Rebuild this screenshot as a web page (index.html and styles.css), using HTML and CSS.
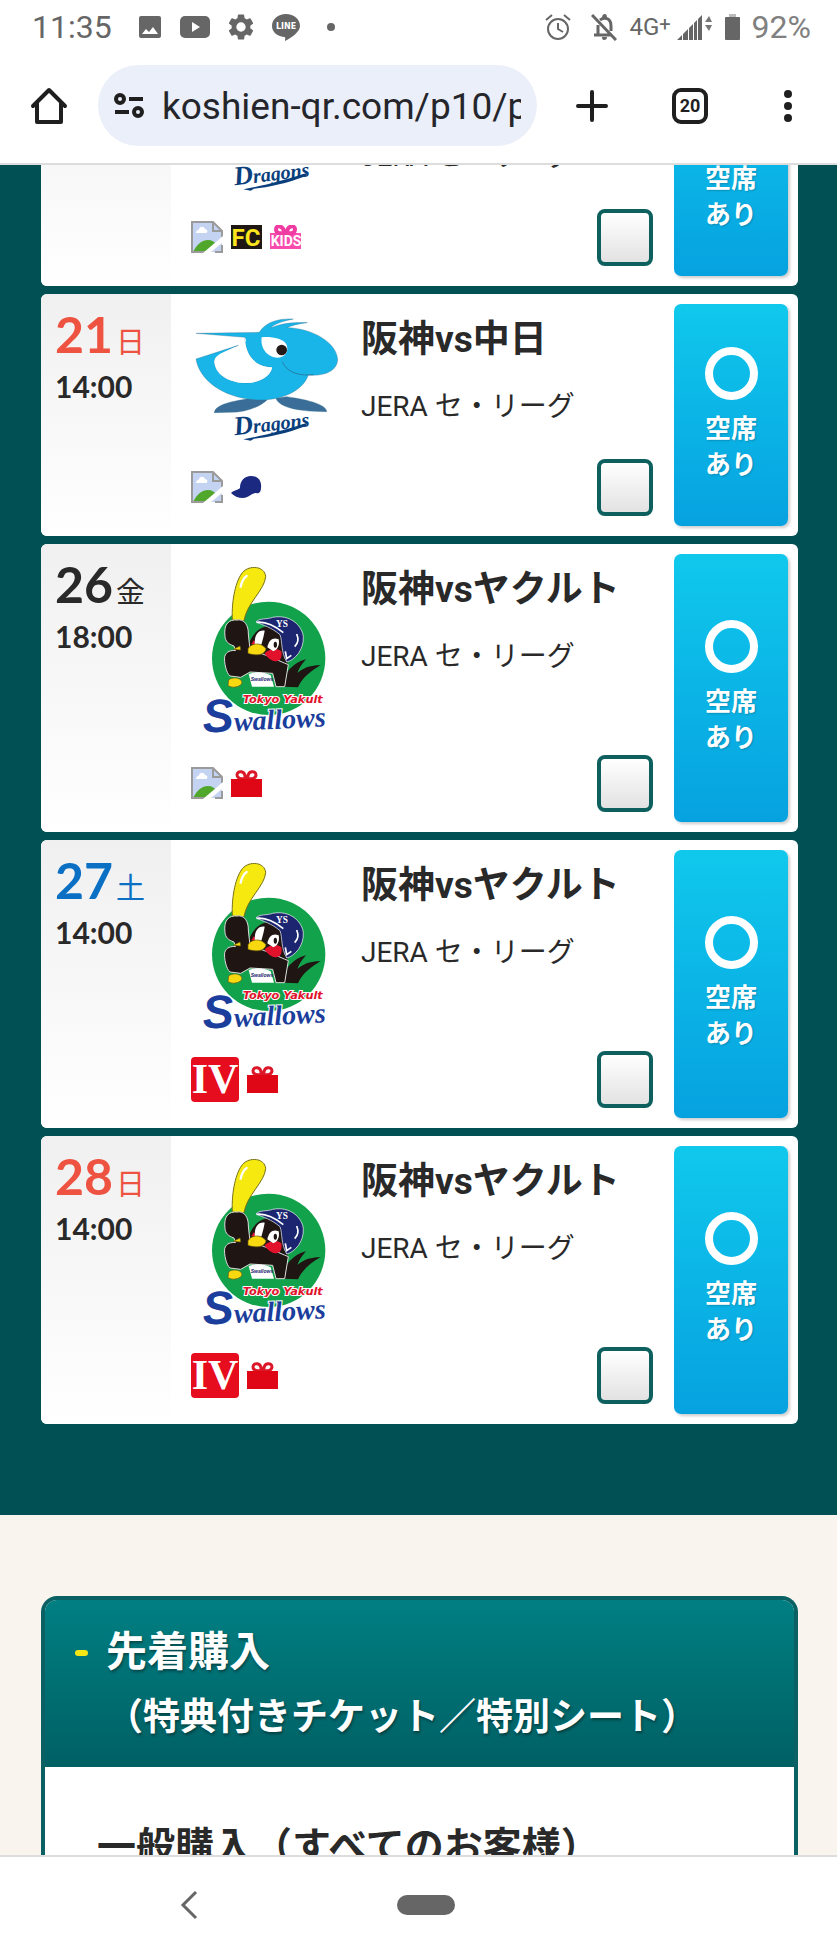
FILE: index.html
```html
<!DOCTYPE html>
<html lang="ja">
<head>
    <meta charset="UTF-8">
    <meta name="viewport" content="width=device-width, initial-scale=1.0">
    <title>甲子園 チケット購入</title>
    <link rel="stylesheet" href="styles.css">
</head>
<body>
    <!-- logos and icons used more than once -->
    <svg class="defs" aria-hidden="true">
        <symbol id="dragons" viewBox="483 462 450 387">
            <g stroke="#2a6484" stroke-width="1">
                <path fill="#3a6e99" d="M553 758C555 735 600 725 650 717L712 719C690 742 640 758 600 757ZM738 715C745 738 790 755 890 755C890 735 840 720 770 710Z"/>
                <path fill="#19b5e9" d="M498 520L688 517C708 482 755 475 790 477C765 482 735 490 722 504C760 487 800 487 832 488C800 492 784 497 772 503C850 505 922 550 923 600C920 635 880 649 835 645C820 690 760 720 690 720C580 717 508 660 498 597L625 556C600 570 556 585 553 605C556 650 610 670 650 669C700 667 725 642 726 622C670 620 645 580 645 532L560 525Z"/>
                <path fill="none" stroke-width="2" d="M757 605C772 640 810 648 850 644"/>
            </g>
            <path fill="#fff" d="M645 532C660 560 618 556 600 568C570 580 553 590 553 605C556 650 610 670 650 669C700 667 725 642 726 622C670 620 645 580 645 532Z"/>
            <path fill="#fff" d="M695 532C690 568 715 593 742 593C765 593 777 575 770 555C762 535 720 529 695 532Z"/>
            <circle cx="755" cy="570" r="16" fill="#241a18"/>
            <text x="614" y="826" transform="rotate(-7 614 826)" class="dragons-text"><tspan class="dragons-d">D</tspan>ragons</text>
            <path fill="#0a3f7c" d="M640 838C700 826 760 812 832 788L828 798C770 820 715 832 672 836L662 842Z"/>
        </symbol>
        <symbol id="swallows" viewBox="483 72 450 525">
            <circle cx="716" cy="355" r="170" fill="#12a24c"/>
            <path fill="#1f1613" d="M762 440L772 396C790 372 815 360 828 358C812 376 806 388 803 398C825 380 850 375 872 376C845 390 815 415 804 442Z"/>
            <path fill="#f6e90f" stroke="#77701c" stroke-width="3" d="M607 240C604 180 618 120 638 97C658 74 705 78 707 110C704 150 650 190 642 242Z"/>
            <path fill="none" stroke="#fff" stroke-width="7" stroke-linecap="round" d="M632 140C636 122 644 112 650 108"/>
            <path fill="#1f1613" d="M655 340C650 300 680 256 730 256L776 280L772 380Z"/>
            <path fill="#1f1613" stroke="#ddd" stroke-width="3" d="M585 290C580 250 598 238 622 240C642 236 656 256 655 282L660 330C700 340 745 362 775 374L764 440L738 440L728 400L660 396L632 412L600 408C588 398 582 366 584 350C588 334 604 330 616 332L612 318C594 312 587 304 585 290Z"/>
            <path fill="#1c2570" stroke="#fff" stroke-width="2" d="M678 246C686 234 714 238 728 232C780 222 816 256 820 290C822 330 794 360 770 366C752 334 758 306 750 284C724 262 700 256 678 246Z"/>
            <path fill="none" stroke="#fff" stroke-width="5" d="M680 247C706 244 735 258 760 278M800 282C808 300 802 312 794 320M766 334L770 356L784 346"/>
            <text x="738" y="262" class="cap-text">YS</text>
            <path fill="#e2122c" d="M704 340C716 326 742 322 754 334C758 352 750 364 736 364C722 362 710 352 704 340ZM664 312L672 300L678 314Z"/>
            <path fill="#fff" d="M674 312C674 284 684 270 704 272C702 286 698 300 694 314ZM712 322C716 300 730 290 746 298C750 316 742 330 730 334Z"/>
            <ellipse cx="736" cy="314" rx="5" ry="9" fill="#1f1613"/>
            <path fill="#f8d90f" stroke="#6b5a10" stroke-width="2" d="M654 326C664 308 694 306 708 326C706 342 684 350 654 340Z"/>
            <path fill="#f8d90f" stroke="#6b5a10" stroke-width="2" d="M596 420C606 410 632 412 636 426C636 442 602 446 594 436ZM610 328L630 318L632 330Z"/>
            <path fill="#fff" d="M656 402C680 394 708 398 722 406L732 440L666 440Z"/>
            <text x="662" y="424" class="jersey-text">Swallows</text>
            <text x="520" y="578" transform="rotate(-3 520 578)" class="swallows-text"><tspan class="swallows-s">S</tspan>wallows</text>
            <text x="638" y="488" class="yakult-text">Tokyo Yakult</text>
        </symbol>
        <symbol id="broken" viewBox="0 0 32 32">
            <path fill="#c5d3f3" d="M1 1H22L31 10V31H1Z"/>
            <path fill="#fff" d="M5 12C5 9 8 9 8 8C9 5 13 5 14 8C17 8 17 12 15 12Z"/>
            <path fill="#50a72c" d="M2 31C6 23 11 19 17 19C21 19 24 21 26 24L20 31Z"/>
            <path fill="none" stroke="#9b9b9b" stroke-width="2" d="M14 31H1V1H22L31 10V16M22 1V10H31M31 24V31H24"/>
            <path fill="#fff" d="M12 32L32 15V21L19 32Z"/>
        </symbol>
        <symbol id="gift" viewBox="0 0 31 27">
            <path fill="none" stroke="#dc1728" stroke-width="3" d="M14 9C15 0 6 0 6 5C6 8 9 9 14 9ZM17 9C16 0 25 0 25 5C25 8 22 9 17 9Z"/>
            <path fill="#df0716" d="M0 9H31V27H0Z"/>
        </symbol>
        <symbol id="cap" viewBox="0 0 31 24">
            <path fill="#1c2980" d="M0 18C3 15 7 15 9 13C9 6 13 1 20 1C27 1 31 6 30 13C30 17 28 19 25 18C21 18 17 23 12 23C7 23 3 21 0 18Z"/>
        </symbol>
    </svg>

    <header class="browser">
        <div class="status">
            <span class="clock">11:35</span>
            <div class="notices">
                <svg width="24" height="24" viewBox="0 0 24 24"><path fill="#666" fill-rule="evenodd" d="M3 1H21Q23 1 23 3V21Q23 23 21 23H3Q1 23 1 21V3Q1 1 3 1ZM4 19H20L15 12L11 17L8 14Z"/></svg>
                <svg width="30" height="22" viewBox="0 0 30 22"><rect width="30" height="22" rx="5" fill="#666"/><path fill="#fff" d="M12 6L20 11L12 16Z"/></svg>
                <svg width="26" height="26" viewBox="2 2 20 20"><path fill="#666" d="M19.14 12.94c.04-.3.06-.61.06-.94s-.02-.64-.07-.94l2.03-1.58a.49.49 0 0 0 .12-.61l-1.92-3.32a.49.49 0 0 0-.59-.22l-2.39.96a7 7 0 0 0-1.62-.94l-.36-2.54a.48.48 0 0 0-.48-.41h-3.84a.47.47 0 0 0-.47.41l-.36 2.54c-.59.24-1.13.57-1.62.94l-2.39-.96a.48.48 0 0 0-.59.22L2.74 8.87a.48.48 0 0 0 .12.61l2.03 1.58c-.05.3-.09.63-.09.94s.02.64.07.94l-2.03 1.58a.49.49 0 0 0-.12.61l1.92 3.32c.12.22.37.29.59.22l2.39-.96c.5.38 1.03.7 1.62.94l.36 2.54c.05.24.24.41.48.41h3.84c.24 0 .44-.17.47-.41l.36-2.54a7 7 0 0 0 1.62-.94l2.39.96c.22.08.47 0 .59-.22l1.92-3.32a.48.48 0 0 0-.12-.61zM12 15.6a3.6 3.6 0 1 1 0-7.2 3.6 3.6 0 0 1 0 7.2z"/></svg>
                <svg width="28" height="27" viewBox="0 0 28 27"><path fill="#666" d="M14 0C6 0 0 5 0 12C0 18 5 22 12 23C14 23 13 25 13 27C19 24 28 18 28 12C28 5 22 0 14 0Z"/><text x="14" y="15" class="line-text">LINE</text></svg>
                <span class="dot"></span>
            </div>
            <div class="signals">
                <svg width="26" height="26" viewBox="0 0 26 26" fill="none" stroke="#666" stroke-width="2"><circle cx="13" cy="15" r="10"/><path d="M13 9V15L18 18M1 6L7 1M25 6L19 1"/></svg>
                <svg width="26" height="27" viewBox="0 0 26 27" fill="none" stroke="#666" stroke-width="2"><path stroke-width="3" d="M3 21H21M7 21V11M9 6Q13 3 17 5Q20 7 20 12V17M1 1L25 26"/><path fill="#666" stroke="none" d="M11 4Q11 0 14 0Q16 0 16 4ZM11 23H16Q16 26 13 26Q11 26 11 23Z"/></svg>
                <span class="network">4G<sup>+</sup></span>
                <svg width="36" height="25" viewBox="0 0 36 25"><path fill="#666" d="M0 25L5 20V25ZM6 19L11 14V25H6ZM12 13L16 9V25H12ZM17 8L20 5V25H17ZM21 4L25 0V25H21Z"/><path fill="#777" d="M28 7L32 1L35 7ZM28 10H35L32 16Z"/></svg>
                <svg width="15" height="26" viewBox="0 0 15 26"><path fill="#bbb" d="M4 0H11V3H4Z"/><rect y="3" width="15" height="23" rx="1" fill="#666"/></svg>
                <span class="battery">92%</span>
            </div>
        </div>
        <div class="toolbar">
            <button class="tool" aria-label="ホーム">
                <svg width="38" height="38" viewBox="0 0 38 38" fill="none" stroke="#1f1f1f" stroke-width="4" stroke-linejoin="round" stroke-linecap="round"><path d="M3 19L19 3L35 19M7 16V35H31V16"/></svg>
            </button>
            <div class="address">
                <svg width="30" height="26" viewBox="0 0 30 26" fill="none" stroke="#1f1f1f" stroke-width="4"><circle cx="6" cy="6" r="4"/><path d="M15 6H29M1 19H15"/><circle cx="24" cy="19" r="4"/></svg>
                <input type="text" class="url" aria-label="アドレス" value="koshien-qr.com/p10/p10.html">
            </div>
            <button class="tool" aria-label="新しいタブ">
                <svg width="34" height="34" viewBox="0 0 34 34" stroke="#1f1f1f" stroke-width="4" stroke-linecap="round"><path d="M17 3V31M3 17H31"/></svg>
            </button>
            <button class="tool" aria-label="タブ一覧"><span class="tabs">20</span></button>
            <button class="tool" aria-label="メニュー">
                <svg width="10" height="34" viewBox="0 0 10 34" fill="#1f1f1f"><circle cx="5" cy="5" r="4"/><circle cx="5" cy="17" r="4"/><circle cx="5" cy="29" r="4"/></svg>
            </button>
        </div>
    </header>

    <main class="page">
        <ul class="games">
            <li class="game game-scrolled">
                <div class="date"><p class="day sat"><b>20</b>土</p><p class="time">14:00</p></div>
                <div class="team">
                    <svg class="logo dragons" role="img" aria-label="Dragons"><use href="#dragons"/></svg>
                    <div class="perks">
                        <svg width="32" height="32"><use href="#broken"/></svg>
                        <svg width="31" height="24" viewBox="0 0 31 24"><rect width="31" height="24" fill="#1f1714"/><text x="15" y="21" class="fc-text">FC</text></svg>
                        <svg width="31" height="24" viewBox="0 0 31 24"><path fill="#fa4cae" d="M0 8H31V24H0Z"/><path fill="none" stroke="#f03ba2" stroke-width="4" d="M14 8C14 0 6 0 6 4C6 8 9 9 14 8ZM17 8C17 0 25 0 25 4C25 8 22 9 17 8Z"/><text x="16" y="21" class="kids-text">KIDS</text></svg>
                    </div>
                </div>
                <div class="info">
                    <h2>阪神vs中日</h2>
                    <p>JERA セ・リーグ</p>
                    <input type="checkbox" aria-label="20日 阪神vs中日">
                </div>
                <a class="seats" href="#"><span class="ring"></span>空席<br>あり</a>
            </li>
            <li class="game">
                <div class="date"><p class="day sun"><b>21</b>日</p><p class="time">14:00</p></div>
                <div class="team">
                    <svg class="logo dragons" role="img" aria-label="Dragons"><use href="#dragons"/></svg>
                    <div class="perks">
                        <svg width="32" height="32"><use href="#broken"/></svg>
                        <svg width="31" height="24"><use href="#cap"/></svg>
                    </div>
                </div>
                <div class="info">
                    <h2>阪神vs中日</h2>
                    <p>JERA セ・リーグ</p>
                    <input type="checkbox" aria-label="21日 阪神vs中日">
                </div>
                <a class="seats" href="#"><span class="ring"></span>空席<br>あり</a>
            </li>
            <li class="game">
                <div class="date"><p class="day"><b>26</b>金</p><p class="time">18:00</p></div>
                <div class="team">
                    <svg class="logo swallows" role="img" aria-label="Swallows"><use href="#swallows"/></svg>
                    <div class="perks">
                        <svg width="32" height="32"><use href="#broken"/></svg>
                        <svg width="31" height="27"><use href="#gift"/></svg>
                    </div>
                </div>
                <div class="info">
                    <h2>阪神vsヤクルト</h2>
                    <p>JERA セ・リーグ</p>
                    <input type="checkbox" aria-label="26日 阪神vsヤクルト">
                </div>
                <a class="seats" href="#"><span class="ring"></span>空席<br>あり</a>
            </li>
            <li class="game">
                <div class="date"><p class="day sat"><b>27</b>土</p><p class="time">14:00</p></div>
                <div class="team">
                    <svg class="logo swallows" role="img" aria-label="Swallows"><use href="#swallows"/></svg>
                    <div class="perks">
                        <span class="iv">IV</span>
                        <svg width="31" height="27"><use href="#gift"/></svg>
                    </div>
                </div>
                <div class="info">
                    <h2>阪神vsヤクルト</h2>
                    <p>JERA セ・リーグ</p>
                    <input type="checkbox" aria-label="27日 阪神vsヤクルト">
                </div>
                <a class="seats" href="#"><span class="ring"></span>空席<br>あり</a>
            </li>
            <li class="game">
                <div class="date"><p class="day sun"><b>28</b>日</p><p class="time">14:00</p></div>
                <div class="team">
                    <svg class="logo swallows" role="img" aria-label="Swallows"><use href="#swallows"/></svg>
                    <div class="perks">
                        <span class="iv">IV</span>
                        <svg width="31" height="27"><use href="#gift"/></svg>
                    </div>
                </div>
                <div class="info">
                    <h2>阪神vsヤクルト</h2>
                    <p>JERA セ・リーグ</p>
                    <input type="checkbox" aria-label="28日 阪神vsヤクルト">
                </div>
                <a class="seats" href="#"><span class="ring"></span>空席<br>あり</a>
            </li>
        </ul>

        <section class="purchase">
            <div class="panel">
                <div class="panel-head">
                    <span class="dash"></span>
                    <h2>先着購入<br><small>（特典付きチケット／特別シート）</small></h2>
                </div>
                <h3>一般購入（すべてのお客様）</h3>
            </div>
        </section>
    </main>

    <nav class="navbar">
        <button class="back" aria-label="戻る">
            <svg width="18" height="30" viewBox="0 0 18 30" fill="none" stroke="#666" stroke-width="3"><path d="M16 2L3 15L16 28"/></svg>
        </button>
        <button class="home-pill" aria-label="ホーム"></button>
    </nav>
</body>
</html>
```
FILE: styles.css
```css
* {
    box-sizing: border-box;
}
body {
    display: flex;
    flex-direction: column;
    height: 100vh;
    margin: 0;
    overflow: hidden;
    background: #fff;
    color: #292929;
    font-family: Roboto, "Noto Sans CJK JP", sans-serif;
}
h2, h3, p, ul {
    margin: 0;
    padding: 0;
}
button {
    padding: 0;
    border: none;
    background: none;
    font-family: inherit;
}
svg {
    display: block;
    flex: none;
}
.defs {
    position: absolute;
    width: 0;
    height: 0;
}

/* browser bars */
.browser {
    flex: none;
    border-bottom: 2px solid #ddd;
}
.status {
    display: flex;
    align-items: center;
    height: 54px;
    padding: 0 26px 0 32px;
    color: #666;
}
.clock, .battery {
    font-size: 32px;
}
.battery {
    color: #808080;
}
.notices {
    display: flex;
    align-items: center;
    gap: 18px;
    margin-left: 26px;
}
.dot {
    width: 8px;
    height: 8px;
    margin-left: 9px;
    border-radius: 50%;
    background: #666;
}
.signals {
    display: flex;
    align-items: center;
    gap: 12px;
    margin-left: auto;
}
.signals svg:first-child {
    margin-right: 8px;
}
.network {
    margin-right: -6px;
    font-size: 24px;
    line-height: 28px;
}
.network sup {
    font-size: 20px;
    line-height: 0;
    vertical-align: 4px;
}
.toolbar {
    display: flex;
    align-items: center;
    height: 109px;
    padding-bottom: 6px;
}
.tool {
    display: flex;
    align-items: center;
    justify-content: center;
    width: 98px;
    height: 80px;
}
.address {
    display: flex;
    flex: 1;
    align-items: center;
    gap: 18px;
    min-width: 0;
    height: 81px;
    margin-right: 6px;
    padding: 0 16px;
    border-radius: 41px;
    background: #ebeff9;
}
.url {
    flex: 1;
    min-width: 0;
    height: 60px;
    padding: 2px 0 0;
    border: none;
    background: none;
    color: #25262c;
    font-family: inherit;
    font-size: 37px;
}
.tabs {
    width: 36px;
    height: 36px;
    border: 4px solid #1f1f1f;
    border-radius: 9px;
    color: #1f1f1f;
    font-size: 18px;
    font-weight: bold;
    line-height: 28px;
    text-align: center;
}

/* game list */
.page {
    flex: 1;
    min-height: 0;
    overflow: hidden;
    background: #f9f5ee;
}
.games {
    display: flex;
    flex-direction: column;
    gap: 8px;
    padding: 0 39px 91px 41px;
    background: #005054;
    list-style: none;
}
.game {
    display: flex;
    border-radius: 6px;
    background: #fff;
}
.game-scrolled {
    margin-top: -121px;
}
.date {
    width: 130px;
    padding: 12px 0 0 14px;
    border-radius: 6px 0 0 6px;
    background: linear-gradient(#f0f0f0, #fff);
    font-family: Lato, "Noto Sans CJK JP", sans-serif;
}
.day {
    font-size: 29px;
    line-height: 56px;
    white-space: nowrap;
}
.day b {
    margin-right: 3px;
    font-size: 50px;
}
.sun {
    color: #ee5342;
}
.sat {
    color: #0b6fc4;
}
.time {
    font-size: 30px;
    font-weight: bold;
    line-height: 32px;
}
.team {
    width: 190px;
    padding: 20px 20px 26px;
}
.logo {
    width: 150px;
    margin-bottom: 21px;
}
.dragons {
    height: 129px;
}
.swallows {
    height: 175px;
}
.perks {
    display: flex;
    align-items: center;
    gap: 8px;
    height: 46px;
}
.iv {
    width: 48px;
    height: 45px;
    border-radius: 4px;
    background: #e50d1e;
    color: #fff;
    font-family: "Liberation Serif", serif;
    font-size: 42px;
    font-weight: bold;
    line-height: 45px;
    text-align: center;
}
.info {
    display: flex;
    flex: 1;
    flex-direction: column;
    min-width: 0;
    padding: 26px 21px 20px 0;
}
.info h2 {
    margin-bottom: 27px;
    font-size: 37px;
    line-height: 40px;
    white-space: nowrap;
}
.info p {
    font-size: 28px;
    line-height: 40px;
    white-space: nowrap;
}
.info input {
    width: 56px;
    height: 57px;
    margin: auto 0 0 auto;
    border: 4px solid #0e605e;
    border-radius: 8px;
    background: linear-gradient(#fff, #e2e2e2);
    appearance: none;
}
.seats {
    display: flex;
    flex-direction: column;
    align-items: center;
    justify-content: center;
    width: 114px;
    margin: 10px 10px 10px 0;
    border-radius: 7px;
    background: linear-gradient(#10c8ec, #06a2e0);
    box-shadow: 2px 2px 3px rgba(0, 0, 0, 0.2);
    color: #fff;
    font-size: 26px;
    font-weight: bold;
    line-height: 36px;
    text-decoration: none;
    text-shadow: 1px 1px 2px rgba(0, 0, 0, 0.2);
}
.ring {
    width: 53px;
    height: 53px;
    margin-bottom: 11px;
    border: 8px solid #fff;
    border-radius: 50%;
}

/* text inside the logos */
.dragons-text {
    fill: #0a3f7c;
    font: italic bold 60px "Liberation Serif", serif;
}
.dragons-d {
    font-size: 80px;
}
.swallows-text {
    fill: #1b3d9c;
    stroke: #fff;
    stroke-width: 6px;
    paint-order: stroke;
    font: italic bold 84px "Liberation Serif", serif;
}
.swallows-s {
    font-family: "Liberation Sans", sans-serif;
    font-size: 140px;
}
.yakult-text {
    fill: #e2122c;
    stroke: #fff;
    stroke-width: 6px;
    paint-order: stroke;
    font: italic bold 34px "DejaVu Sans", sans-serif;
}
.cap-text {
    fill: #fff;
    font: bold 28px "Liberation Serif", serif;
}
.jersey-text {
    fill: #1c2570;
    font: italic bold 15px "Liberation Sans", sans-serif;
}
.line-text {
    fill: #fff;
    font: bold 8px "DejaVu Sans", sans-serif;
    text-anchor: middle;
}
.fc-text {
    fill: #fbe51c;
    font: bold 24px "DejaVu Sans Condensed", Roboto, sans-serif;
    font-family: Roboto, sans-serif;
    text-anchor: middle;
}
.kids-text {
    fill: #fff;
    font: bold 14px Roboto, sans-serif;
    text-anchor: middle;
}

/* purchase panel */
.purchase {
    padding: 81px 39px 0 41px;
}
.panel {
    border: 4px solid #0b6063;
    border-bottom: none;
    border-radius: 16px 16px 0 0;
    background: #fff;
}
.panel-head {
    display: flex;
    height: 167px;
    padding: 20px 30px;
    border-radius: 12px 12px 0 0;
    background: linear-gradient(#007f82, #006064);
    color: #fff;
    text-shadow: 1px 2px 3px rgba(0, 0, 0, 0.4);
}
.dash {
    width: 13px;
    height: 6px;
    margin: 30px 18px 0 0;
    border-radius: 3px;
    background: #f5e616;
}
.panel-head h2 {
    font-size: 41px;
    line-height: 64px;
}
.panel-head small {
    font-size: 37px;
}
.panel h3 {
    padding: 52px;
    font-size: 39px;
    line-height: 56px;
    white-space: nowrap;
}

/* system navigation */
.navbar {
    display: grid;
    flex: none;
    grid-template-columns: 26fr 58px 25fr;
    align-items: center;
    height: 98px;
    border-top: 2px solid #ddd;
}
.back {
    justify-self: center;
    margin-right: 20px;
}
.home-pill {
    grid-column: 2;
    height: 20px;
    border-radius: 10px;
    background: #666;
}
```
